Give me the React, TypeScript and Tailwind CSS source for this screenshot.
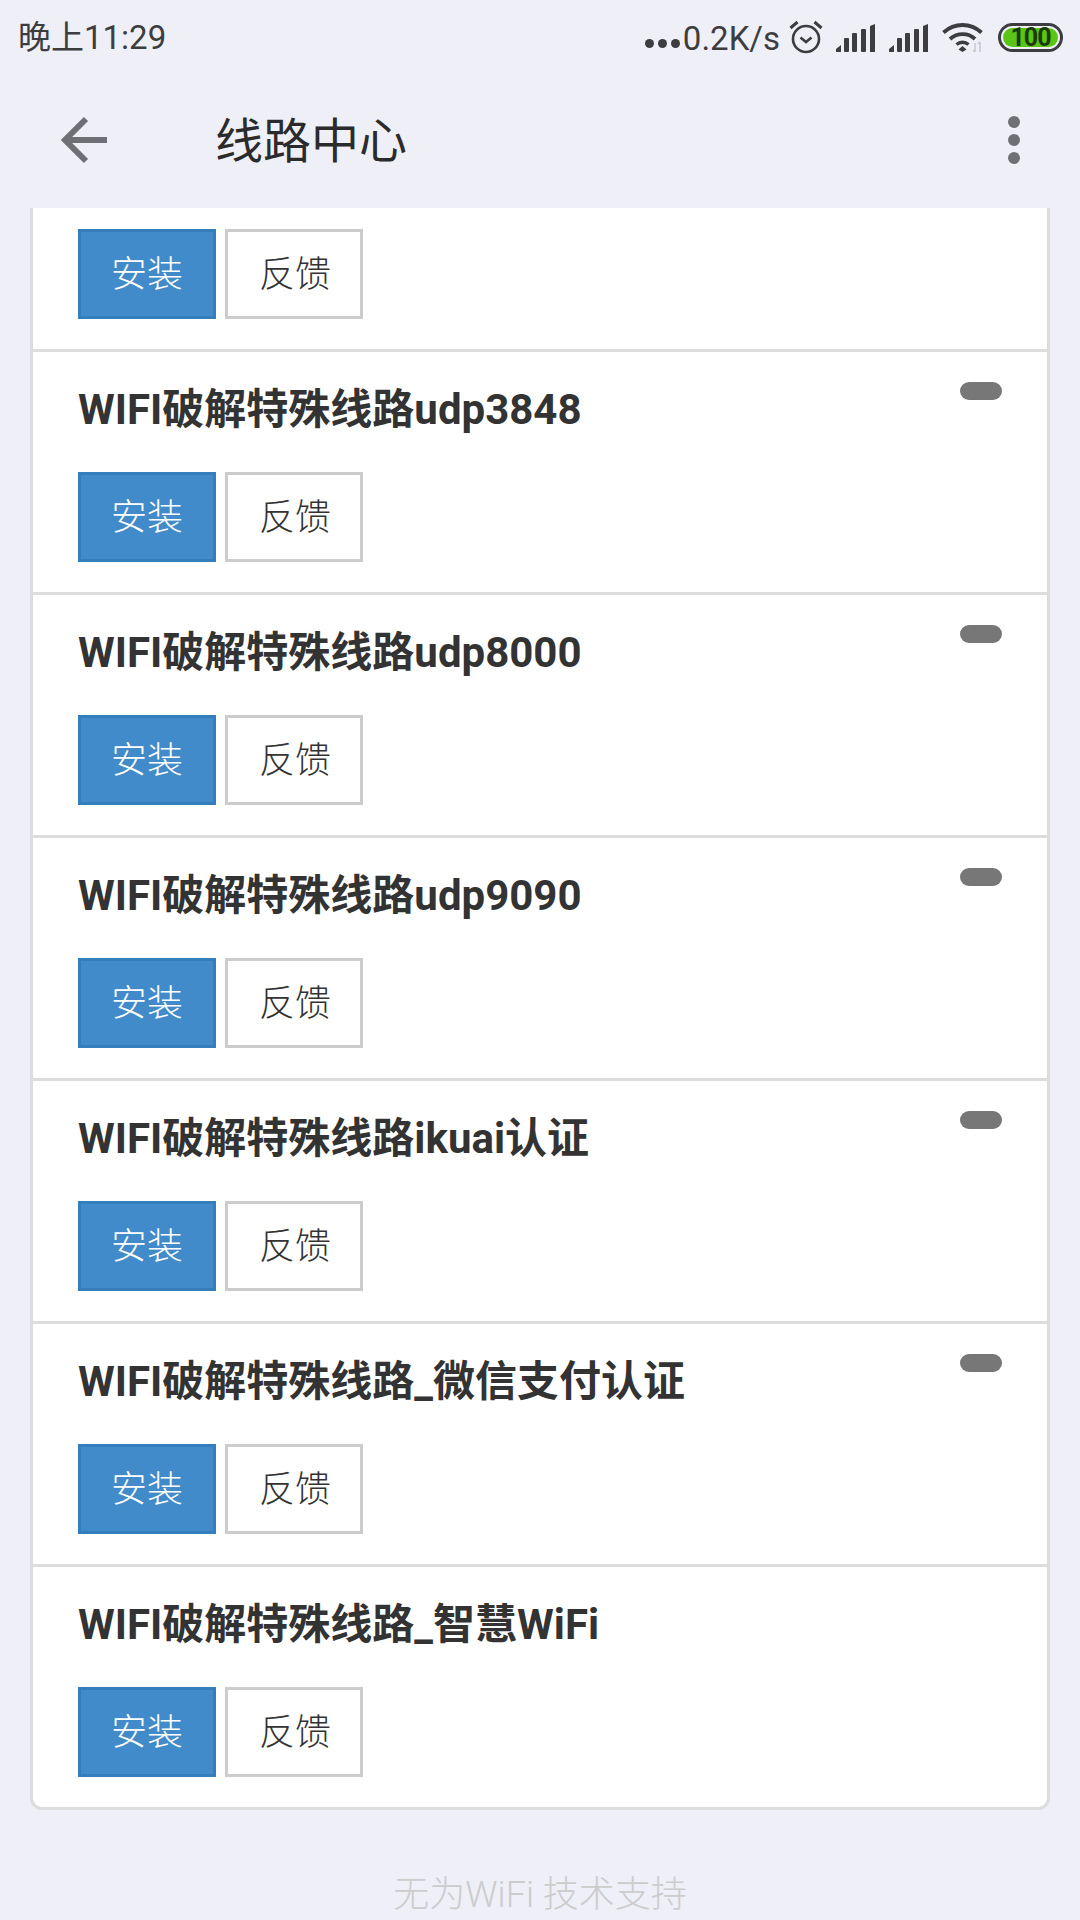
import React from 'react';

const FONT = "font-['Roboto','Noto_Sans_CJK_SC',sans-serif]";

const lines = [
  { name: 'WIFI破解特殊线路udp3848', badge: true },
  { name: 'WIFI破解特殊线路udp8000', badge: true },
  { name: 'WIFI破解特殊线路udp9090', badge: true },
  { name: 'WIFI破解特殊线路ikuai认证', badge: true },
  { name: 'WIFI破解特殊线路_微信支付认证', badge: true },
  { name: 'WIFI破解特殊线路_智慧WiFi', badge: false },
];

const SignalIcon = () => (
  <svg width="39" height="28" viewBox="0 0 39 28" className="block" fill="#3d3d40">
    <path d="M0 28v-3l5-4v7z" />
    <rect x="8" y="14" width="5" height="14" rx="1" />
    <rect x="16" y="9" width="5" height="19" rx="1" />
    <rect x="25" y="5" width="5" height="23" rx="1" />
    <path d="M34 2l5-2v28h-5z" />
  </svg>
);

const AlarmIcon = () => (
  <svg width="34" height="34" viewBox="0 0 34 34" className="block" fill="none" stroke="#3d3d40">
    <circle cx="17" cy="19" r="13" strokeWidth="2.6" />
    <path d="M11.5 17.5l5.5 4.5 5.5-4.5" strokeWidth="2.6" />
    <path d="M1.5 8l7-6M32.5 8l-7-6" strokeWidth="3" />
  </svg>
);

const WifiIcon = () => (
  <svg width="42" height="32" viewBox="0 0 42 32" className="block" fill="none">
    <path d="M1.5 10.5c11-10 27-10 38 0" stroke="#3d3d40" strokeWidth="3.8" />
    <path d="M8 17c7.5-6.5 18-6.500 25 0" stroke="#3d3d40" strokeWidth="3.8" />
    <path d="M14.500 22.500c3.500-3 8.500-3 12 0" stroke="#3d3d40" strokeWidth="3.4" />
    <path d="M16.500 27.500l4-3.500 4 3.500-4 2.500z" fill="#3d3d40" />
    <path d="M33 21v9M31 28l2 2M38 20v10M36 22l2-2" stroke="#c9c9cf" strokeWidth="1.6" />
  </svg>
);

const StatusBar = () => (
  <div className={`${FONT} flex h-[72px] items-center justify-between pl-[18px] pr-[17px] pt-[3px] text-[#3d3d40]`}>
    <span className="text-[33px] leading-none">晚上11:29</span>
    <div className="flex items-center">
      <div className="mt-[11px] flex gap-[4px]">
        <span className="size-[9px] rounded-full bg-[#3d3d40]" />
        <span className="size-[9px] rounded-full bg-[#3d3d40]" />
        <span className="size-[9px] rounded-full bg-[#3d3d40]" />
      </div>
      <span className="ml-[3px] pt-[1px] text-[33px] leading-none">0.2K/s</span>
      <div className="mb-[1px] ml-[9px]">
        <AlarmIcon />
      </div>
      <div className="ml-[13px]">
        <SignalIcon />
      </div>
      <div className="ml-[14px]">
        <SignalIcon />
      </div>
      <div className="ml-[14px]">
        <WifiIcon />
      </div>
      <div className="ml-[14px] flex h-[29px] w-[65px] items-center justify-center rounded-full border-[3px] border-[#3d3d40] p-[2px]">
        <div className="flex h-full w-full items-center justify-center rounded-full bg-[#5ac514] text-[25px] font-bold leading-none tracking-[-1px] text-[#1c3a0a]">
          100
        </div>
      </div>
    </div>
  </div>
);

const Header = () => (
  <div className={`${FONT} flex h-[136px] items-center pl-[60px] pr-[60px]`}>
    <svg width="48" height="48" viewBox="0 0 48 48" fill="none" stroke="#6f6f76" strokeWidth="6" className="block">
      <path d="M47 24H5M26 3L5 24l21 21" />
    </svg>
    <h1 className="ml-[107px] flex-1 pt-[3px] text-[48px] font-normal leading-none text-[#2b2b2b]">线路中心</h1>
    <div className="flex flex-col gap-[6px]">
      <span className="size-[12px] rounded-full bg-[#6f6f76]" />
      <span className="size-[12px] rounded-full bg-[#6f6f76]" />
      <span className="size-[12px] rounded-full bg-[#6f6f76]" />
    </div>
  </div>
);

const Actions = () => (
  <div className="flex gap-[9px]">
    <button className="h-[90px] w-[138px] border-[3px] border-[#357ebd] bg-[#428bca] pt-[1px] text-[36px] font-light text-white">安装</button>
    <button className="h-[90px] w-[138px] border-[3px] border-[#cccccc] bg-white pl-[2px] pt-[1px] text-[36px] font-light text-[#333333]">反馈</button>
  </div>
);

export default function App() {
  return (
    <div className={`${FONT} h-[1920px] w-[1080px] overflow-hidden bg-[#eeeff7]`}>
      <StatusBar />
      <Header />

      <div className="mx-[30px] overflow-hidden rounded-b-[12px] border-x-[3px] border-b-[3px] border-[#dddddd] bg-white">
        {/* first row is scrolled under the header */}
        <div className="px-[45px] pb-[30px] pt-[21px]">
          <Actions />
        </div>
        {lines.map(line => (
          <div key={line.name} className="h-[243px] border-t-[3px] border-[#dddddd] px-[45px] pt-[27px]">
            <div className="flex h-[63px] items-start justify-between">
              <h3 className="pt-[1px] text-[42px] font-bold leading-[60px] text-[#333333]">{line.name}</h3>
              {line.badge && <span className="mt-[3px] h-[18px] w-[42px] rounded-full bg-[#777777]" />}
            </div>
            <div className="mt-[30px]">
              <Actions />
            </div>
          </div>
        ))}
      </div>

      <p className="mt-[61px] text-center text-[36px] font-light leading-[48px] text-[#cccccc]">无为WiFi 技术支持</p>
    </div>
  );
}
